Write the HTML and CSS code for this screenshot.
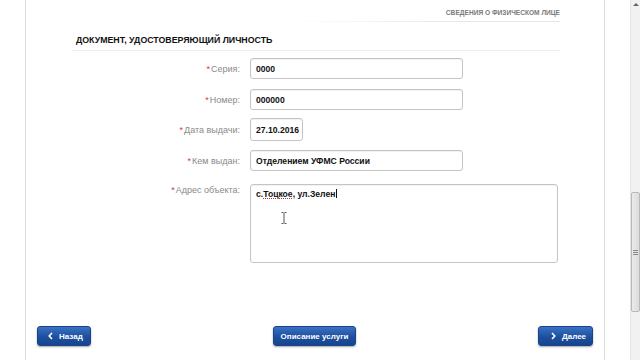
FILE: index.html
```html
<!DOCTYPE html>
<html lang="ru">
<head>
<meta charset="utf-8">
<title>Документ</title>
<link rel="stylesheet" href="styles.css">
</head>
<body>
<div class="window">
  <div class="main">
    <div class="sheet">
      <div class="crumb"><span>СВЕДЕНИЯ О ФИЗИЧЕСКОМ ЛИЦЕ</span></div>
      <h2 class="title">ДОКУМЕНТ, УДОСТОВЕРЯЮЩИЙ ЛИЧНОСТЬ</h2>
      <div class="form">
        <div class="row r1">
          <label class="label"><span class="req">*</span>Серия:</label>
          <div class="field wide">0000</div>
        </div>
        <div class="row r2">
          <label class="label"><span class="req">*</span>Номер:</label>
          <div class="field wide">000000</div>
        </div>
        <div class="row r3">
          <label class="label"><span class="req">*</span>Дата выдачи:</label>
          <div class="field date">27.10.2016</div>
        </div>
        <div class="row r4">
          <label class="label"><span class="req">*</span>Кем выдан:</label>
          <div class="field wide">Отделением УФМС России</div>
        </div>
        <div class="row r5">
          <label class="label top"><span class="req">*</span>Адрес объекта:</label>
          <div class="field area">с.<span class="spell">Тоцкое</span>, ул.Зелен<span class="caret"></span>
            <svg class="ibeam" width="6" height="12" viewBox="0 0 6 12"><path d="M0.5 0.5h2M3.5 0.5h2M3 1v10M0.5 11.5h2M3.5 11.5h2" stroke="#555" stroke-width="1" fill="none"/></svg>
          </div>
        </div>
      </div>
      <div class="actions">
        <button class="btn back"><svg class="chev" width="5" height="8" viewBox="0 0 5 8"><path d="M4 1L1.2 4L4 7" stroke="#fff" stroke-width="1.6" fill="none"/></svg>Назад</button>
        <button class="btn info">Описание услуги</button>
        <button class="btn next"><svg class="chev" width="5" height="8" viewBox="0 0 5 8"><path d="M1 1L3.8 4L1 7" stroke="#fff" stroke-width="1.6" fill="none"/></svg>Далее</button>
      </div>
    </div>
  </div>
  <div class="scrollbar">
    <div class="arrow"></div>
    <div class="thumb"><span class="grip"></span></div>
  </div>
</div>
</body>
</html>
```
FILE: styles.css
```css
* { box-sizing: border-box; }
html, body { margin: 0; padding: 0; background: #fff; }
body { font-family: "Liberation Sans", Arial, sans-serif; color: #222; }

.window { display: flex; width: 640px; height: 360px; overflow: hidden; }
.main { flex: 1; }
.sheet {
  margin-left: 25px;
  width: 580px;
  height: 360px;
  border-left: 1px solid #dcdcdc;
  border-right: 1px solid #dcdcdc;
  padding: 0 44px 0 46px;
  display: flex;
  flex-direction: column;
}
.crumb {
  height: 22px;
  padding-top: 9px;
  text-align: right;
  font-size: 6.6px;
  font-weight: bold;
  color: #7a7a7a;
  border-bottom: 1px solid;
  border-image: linear-gradient(to right, rgba(230,230,230,0) 0%, rgba(230,230,230,0) 45%, #e6e6e6 80%) 1;
}
.title {
  margin: 0;
  height: 29px;
  padding: 13px 0 0 4px;
  font-size: 8.8px;
  font-weight: bold;
  color: #111;
  border-bottom: 1px solid #ececec;
}
.form { display: flex; flex-direction: column; }
.row { display: flex; align-items: center; gap: 10px; }
.r1 { margin-top: 7px; }
.r2 { margin-top: 10px; }
.r3 { margin-top: 8px; }
.r4 { margin-top: 9px; }
.r5 { margin-top: 13px; align-items: flex-start; }
.label {
  width: 168px;
  text-align: right;
  font-size: 9px;
  color: #8a8a8a;
}
.label.top { padding-top: 1px; }
.req { color: #d23c3c; margin-right: 1px; }
.field {
  height: 21px;
  border: 1px solid #c4c4c4;
  border-radius: 3px;
  padding: 0 5px;
  font-size: 8.6px;
  font-weight: bold;
  color: #111;
  display: flex;
  align-items: center;
  box-shadow: inset 0 1px 1px rgba(0,0,0,0.06);
  background: #fff;
}
.wide { width: 213px; }
.date { width: 53px; height: 23px; }
.area {
  position: relative;
  width: 308px;
  height: 79px;
  display: block;
  padding-top: 4px;
  line-height: 10px;
}
.spell { text-decoration: underline dotted #a33; text-underline-offset: 1px; }
.caret { display: inline-block; width: 1px; height: 9px; background: #111; vertical-align: -1px; margin-left: 1px; }
.ibeam { position: absolute; left: 30px; top: 27px; }

.actions {
  margin-top: auto;
  margin-bottom: 14px;
  margin-left: -35px;
  margin-right: -33px;
  display: flex;
  justify-content: space-between;
}
.btn {
  height: 20px;
  padding: 0 8px;
  border: 1px solid #1a4289;
  border-radius: 3px;
  background: linear-gradient(#3a72c4, #1d4f9f 55%, #17458e);
  color: #fff;
  font-family: "Liberation Sans", Arial, sans-serif;
  font-size: 8px;
  font-weight: bold;
  white-space: nowrap;
  box-shadow: 0 1px 2px rgba(0,0,0,0.35);
  display: flex;
  align-items: center;
  gap: 6px;
}
.back { width: 54px; padding-left: 10px; }
.info { width: 83px; justify-content: center; padding: 0; }
.next { width: 55px; padding-left: 12px; }
.chev { flex: none; }

.scrollbar {
  width: 10px;
  height: 360px;
  background: #f1f1f1;
  border-left: 1px solid #e4e4e4;
  position: relative;
}
.arrow {
  position: absolute;
  left: 2px;
  top: 3px;
  width: 0; height: 0;
  border-left: 3px solid transparent;
  border-right: 3px solid transparent;
  border-bottom: 3px solid #666;
}
.thumb {
  position: absolute;
  left: 0;
  top: 192px;
  width: 9px;
  height: 120px;
  background: linear-gradient(to right, #eaeaea, #dcdcdc);
  border: 1px solid #b9b9b9;
  border-radius: 2px;
  display: flex;
  align-items: center;
  justify-content: center;
}
.grip {
  width: 5px;
  height: 5px;
  border-top: 1px solid #888;
  border-bottom: 1px solid #888;
  background: linear-gradient(#888, #888) center / 100% 1px no-repeat;
}
```
